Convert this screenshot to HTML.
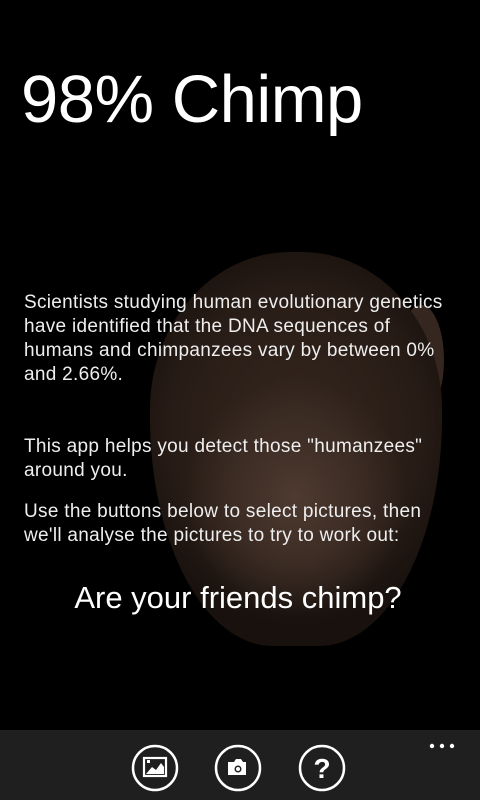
<!DOCTYPE html>
<html><head><meta charset="utf-8"><style>
body{margin:0;width:480px;height:800px;background:#000;position:relative;overflow:hidden;font-family:"Segoe WP","Liberation Sans",sans-serif;color:#fff}
.chimp{position:absolute;left:150px;top:252px;width:292px;height:394px;border-radius:48% 48% 42% 42%/40% 40% 58% 58%;
background:radial-gradient(ellipse 38% 30% at 50% 62%,#4e3a30 0%,#3e2e26 50%,rgba(40,28,22,0) 100%),radial-gradient(ellipse 60% 50% at 50% 45%,#35271f 0%,#281c16 70%,#18110d 100%);}
.ear{position:absolute;width:46px;height:110px;border-radius:50%;background:#35261f}
.l{position:absolute;left:24px;font-size:19px;letter-spacing:0.3px;line-height:24px;white-space:nowrap;color:#eee}
</style></head><body>
<div class="ear" style="left:398px;top:305px"></div>
<div class="chimp"></div>
<div style="position:absolute;left:21px;top:60px;font-size:67px;line-height:80px;letter-spacing:-0.5px">98% Chimp</div>
<div class="l" style="top:291px">Scientists studying human evolutionary genetics</div>
<div class="l" style="top:315px">have identified that the DNA sequences of</div>
<div class="l" style="top:339px">humans and chimpanzees vary by between 0%</div>
<div class="l" style="top:363px">and 2.66%.</div>
<div class="l" style="top:435px">This app helps you detect those "humanzees"</div>
<div class="l" style="top:459px">around you.</div>
<div class="l" style="top:500px">Use the buttons below to select pictures, then</div>
<div class="l" style="top:524px">we'll analyse the pictures to try to work out:</div>
<div style="position:absolute;left:0;width:476px;text-align:center;top:579px;font-size:31px;line-height:38px">Are your friends chimp?</div>
<div style="position:absolute;left:0;top:730px;width:480px;height:70px;background:#1f1f1f">
<svg width="480" height="70" style="position:absolute;left:0;top:0">
<g fill="none" stroke="#fff" stroke-width="2.5">
<circle cx="155" cy="38" r="22"/><circle cx="238" cy="38" r="22"/><circle cx="322" cy="38" r="22"/>
<rect x="144" y="28" width="22" height="18" stroke-width="2.2"/>
</g>
<path d="M146 44 L152 37 L156 40 L161 33 L164 37 L164 44Z" fill="#fff"/>
<rect x="147" y="30" width="3" height="3" fill="#fff"/>
<path d="M228 32 h6 l2 -3 h5 l2 3 h3 v13 h-18z" fill="#fff"/>
<circle cx="238" cy="39" r="3.5" fill="#1f1f1f"/><circle cx="238" cy="39" r="2" fill="#fff"/>
<text x="322" y="48" text-anchor="middle" font-size="28" font-weight="bold" fill="#fff" font-family="Liberation Sans,sans-serif">?</text>
<circle cx="432" cy="16" r="2.2" fill="#fff"/><circle cx="442" cy="16" r="2.2" fill="#fff"/><circle cx="452" cy="16" r="2.2" fill="#fff"/>
</svg></div>
</body></html>
